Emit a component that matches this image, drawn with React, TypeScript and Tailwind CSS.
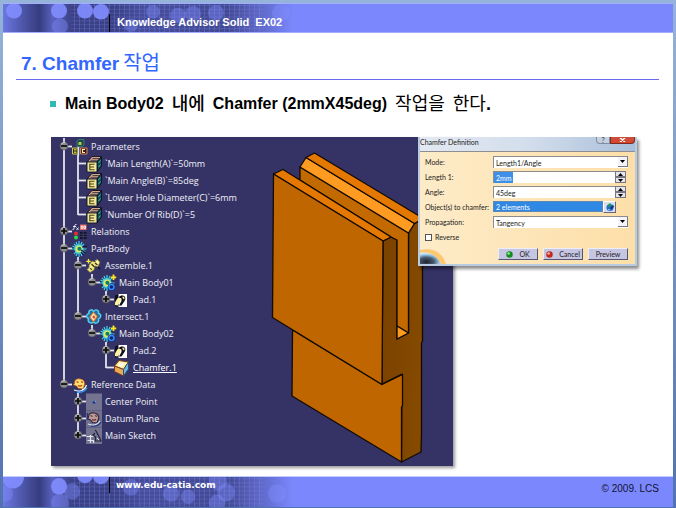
import { useState } from "react"
import type { ReactNode } from "react"

type IconName =
  | "parameters"
  | "param"
  | "relations"
  | "body"
  | "assemble"
  | "bodyPlus"
  | "pad"
  | "intersect"
  | "chamfer"
  | "reference"
  | "point"
  | "plane"
  | "sketch"

interface TreeRow {
  // one character per guide column:
  // "|" line, " " blank, "T" branch, "L" last branch,
  // "m"/"p" minus/plus knob with the line going on, "M"/"P" knob where it ends
  guides: string
  icon: IconName
  label: string
  active?: boolean
}

const TREE: TreeRow[] = [
  { guides: "m", icon: "parameters", label: "Parameters" },
  { guides: "|T", icon: "param", label: "`Main Length(A)`=50mm" },
  { guides: "|T", icon: "param", label: "`Main Angle(B)`=85deg" },
  { guides: "|T", icon: "param", label: "`Lower Hole Diameter(C)`=6mm" },
  { guides: "|L", icon: "param", label: "`Number Of Rib(D)`=5" },
  { guides: "p", icon: "relations", label: "Relations" },
  { guides: "m", icon: "body", label: "PartBody" },
  { guides: "|m", icon: "assemble", label: "Assemble.1" },
  { guides: "||M", icon: "bodyPlus", label: "Main Body01" },
  { guides: "|| P", icon: "pad", label: "Pad.1" },
  { guides: "|M", icon: "intersect", label: "Intersect.1" },
  { guides: "| M", icon: "bodyPlus", label: "Main Body02" },
  { guides: "|  p", icon: "pad", label: "Pad.2" },
  { guides: "|  L", icon: "chamfer", label: "Chamfer.1", active: true },
  { guides: "M", icon: "reference", label: "Reference Data" },
  { guides: " p", icon: "point", label: "Center Point" },
  { guides: " p", icon: "plane", label: "Datum Plane" },
  { guides: " P", icon: "sketch", label: "Main Sketch" },
]

function Guide({ kind }: { kind: string }) {
  const ends = kind === "L" || kind === "M" || kind === "P"
  const knob = "mMpP".includes(kind)
  const plus = kind === "p" || kind === "P"

  return (
    <svg className="h-[17px] w-3.5 shrink-0 overflow-visible" viewBox="0 0 14 17" aria-hidden="true">
      {kind !== " " && <path d={ends ? "M7 0V9" : "M7 0V17"} stroke="#e4e4ee" strokeWidth="1.8" />}
      {kind !== " " && kind !== "|" && <path d="M7 8.500H15" stroke="#e4e4ee" strokeWidth="1.8" />}
      {knob && (
        <>
          <circle cx="7" cy="8" r="4" fill="#8c8c8c" stroke="#4a4a5c" strokeWidth="0.6" />
          <path d="M4.200 6.200a4 4 0 0 1 4-1.600" stroke="#d8d8d8" strokeWidth="1" fill="none" />
          <path d={plus ? "M4 8H10M7 5V11" : "M4 8H10"} stroke="#0a0a0a" strokeWidth="1.7" />
        </>
      )}
    </svg>
  )
}

function Gear({ plus = false }: { plus?: boolean }) {
  return (
    <>
      <path
        d="M7 0v16M-0.500 8h15M2 2.800l10 10.400M12 2.800L2 13.200M4 1l6 14M10 1L4 15M0.500 5l13 6"
        stroke="#3fd4f0"
        strokeWidth="1.2"
      />
      <circle cx="7" cy="8" r="4.600" fill="#5fdccc" />
      <circle cx="7" cy="8" r="3.300" fill="#e0ea58" />
      <circle cx="7.400" cy="7.800" r="2" fill="#0f7c74" />
      {plus ? (
        <>
          <circle cx="11.500" cy="12" r="3.800" fill="#10246c" />
          <circle cx="11.500" cy="12" r="2.500" fill="none" stroke="#2f8cff" strokeWidth="1.5" />
          <path d="M13.500-0.500v5.500M10.800 2.300h5.400" stroke="#ffe81e" strokeWidth="1.8" />
        </>
      ) : (
        <path d="M9 9l5 3M10 6l5-1M9 11l3 3" stroke="#0e1848" strokeWidth="1.2" />
      )}
    </>
  )
}

const SWIRL = (
  <>
    <path
      d="M2.500 6c0-4 3-4.500 6-4S13.500 5 12.500 8l-1.500 4-4.500-.5L4.500 9 1.500 8z"
      fill="#ffe36a"
      stroke="#b04a1c"
      strokeWidth="0.8"
    />
    <path d="M4.500 4.500l2 1M9 4.500l2 1M6 8.500c1.500.8 3 .6 4-.3" stroke="#d42a2a" strokeWidth="1.2" fill="none" />
    <path d="M2 13c5 2 9 1.500 12-3M10 13c2-.5 3.500-2 4.500-5" stroke="#e8f4ff" strokeWidth="1.3" fill="none" />
    <path d="M5 15c4 .8 8-1 10-4" stroke="#2aa0ff" strokeWidth="1.3" fill="none" />
  </>
)

const ICONS: Record<IconName, ReactNode> = {
  parameters: (
    <>
      <path d="M5 2l1.500-1.500H12V6l-1.500 1.500H5z" fill="#1b4a48" stroke="#3e8c80" strokeWidth="0.8" />
      <path d="M7 6V3.500h2V6M7 5h2" stroke="#e8f060" strokeWidth="0.9" fill="none" />
      <path d="M0.500 9h5.500v6H0.500z" fill="#302c10" stroke="#e6de58" strokeWidth="0.9" />
      <path d="M2 10.500h2.500M2 12h2.500M2 13.500h2.500" stroke="#e6de58" strokeWidth="0.8" />
      <path d="M8.500 9H15v6H8.500z" fill="#401a10" stroke="#e8935c" strokeWidth="0.9" />
      <path d="M13 10.500h-2.500v3H13" stroke="#fff0c8" strokeWidth="1.100" fill="none" />
      <path d="M6.500 16.500V8" stroke="#e4e4ee" strokeWidth="1.500" />
    </>
  ),
  param: (
    <>
      <path d="M1 6L6 0.500h9.500L11 6z" fill="#d9a486" stroke="#0f1024" strokeWidth="0.900" />
      <path d="M4.500 4.300h7.500M6.500 2.500h7" stroke="#3a3a44" strokeWidth="0.9" />
      <path d="M11 6l4.500-5.500v9.500L11 16z" fill="#0c5056" stroke="#0f1024" strokeWidth="0.900" />
      <path d="M12.500 7l2-2.500M12.500 11l2-2.500" stroke="#46b4ac" strokeWidth="1" />
      <path d="M1 6H11v10H1z" fill="#f0e79a" stroke="#0f1024" strokeWidth="0.900" />
      <path d="M8.500 8.300H3.800v5.400h4.700M3.800 11h4.200" stroke="#4b4310" strokeWidth="1.1" fill="none" />
    </>
  ),
  relations: (
    <>
      <path d="M4.500 0.500C2.800 0 2.500 2 2.200 3.500S1.500 6 0.500 5.500M1 2.500h3" stroke="#fff" strokeWidth="0.9" fill="none" />
      <path d="M4.500 3.500l2 2.500M6.500 3.500l-2 2.500" stroke="#fff" strokeWidth="0.8" />
      <path d="M8 0.500h6.500V6H8z" fill="#e86a6a" />
      <path d="M9.300 2v2.500h1.500V2zM12 2v2.500h1.500V2z" stroke="#fff" strokeWidth="0.8" fill="none" />
      <circle cx="4" cy="9.500" r="2" fill="#ee2c2c" />
      <circle cx="4" cy="13.500" r="2" fill="#2fd84a" />
      <path d="M8 8h6.500v7H8z" fill="#15152e" />
      <path d="M8 10.300h6.500M8 12.600h6.500M11.200 8v7" stroke="#484878" strokeWidth="0.7" />
    </>
  ),
  body: <Gear />,
  assemble: (
    <>
      <path d="M3 7l3-4 3 1 2-3 3 3-2 5-3-1-1 4-4 2.500-3-3 2-2z" fill="#f2e98c" stroke="#77702c" strokeWidth="0.8" />
      <path d="M5.500 6l3 3M9 5l2.500 2M4 10.500l2 1" stroke="#3a3610" strokeWidth="1.3" />
      <path d="M9.500 2.500l3 3" stroke="#fffce0" strokeWidth="1" />
      <path d="M2.500 1v4.500M0.300 3.300h4.400" stroke="#ffec3a" strokeWidth="1.3" />
      <path d="M12 9l2 2" stroke="#10102c" strokeWidth="1.500" />
    </>
  ),
  bodyPlus: <Gear plus />,
  pad: (
    <>
      <path d="M1 3.500L5 2v12.500H1z" fill="#0e0e1c" />
      <path d="M4.500 2H13v13H4.500z" fill="#fff" />
      <path d="M4.500 5.500C6 3.500 8 3 10 4s1.500 3.500.5 5l-3 4.500H5L7.500 9V6.500z" fill="#0e0e1c" />
      <path d="M3 7c1-1.500 2.500-1.500 4-.5L6 10l-2.500 3.500-2.500-.5V10.500z" fill="#fff29a" />
      <path d="M8.500 4.500c2 0 2.500 1.500 1.500 3L8.500 6z" fill="#fff29a" />
    </>
  ),
  intersect: (
    <>
      <path
        d="M7.500 2.500C6-0.500 2 1 3 4.500 0 5 0 9 2.500 9.500 1 13 5 15.500 7.500 13c2 2.500 6 .5 5-3C15.500 9 15.500 5 12.500 4.500 13.500 1 9.500-0.500 7.500 2.500z"
        fill="#286f9c"
        stroke="#52d2f4"
        strokeWidth="1.4"
      />
      <path d="M7.500 3.500l3.500 4-3.500 5L4 8z" fill="#fff4d0" stroke="#ee8430" strokeWidth="1.1" />
      <path d="M6 8l2-2 1.500 2L8 10z" fill="#d8502c" />
    </>
  ),
  chamfer: (
    <>
      <path d="M5 0.500l9.500 1.500L9.500 9.500 0.500 6z" fill="#fff09a" stroke="#7b3c14" strokeWidth="1" />
      <path d="M6 2.500l5 .8-2.500 4L3.500 5.500z" fill="#fffbe4" />
      <path d="M0.500 6l9 3.500V16L0.500 11.500z" fill="#e9aa58" stroke="#7b3c14" strokeWidth="1" />
      <path d="M9.500 9.500L14.500 2v7l-5 7z" fill="#6ab6dc" stroke="#2a4a6c" strokeWidth="0.9" />
    </>
  ),
  reference: SWIRL,
  point: (
    <>
      <path d="M0-0.500h16v17H0z" fill="#747490" />
      <path d="M6.500 8.500h3M8 7v3" stroke="#163a8c" strokeWidth="1.2" />
      <path d="M9 7.500h1" stroke="#6cc0ff" strokeWidth="1" />
    </>
  ),
  plane: (
    <>
      <path d="M0-0.500h16v17H0z" fill="#70708c" />
      <path d="M2.500 6c0-4 3-4.500 6-4S13.500 5 12.500 8l-1.500 4-4.500-.5L4.500 9 1.500 8z" fill="#b89c98" stroke="#2c2038" strokeWidth="1.1" />
      <path d="M4.500 4.500l2 1M9 4.500l2 1M6 8.500c1.500.8 3 .6 4-.3" stroke="#6c2c38" strokeWidth="1.2" fill="none" />
      <path d="M2 13c5 2 9 1.500 12-3" stroke="#d4e0f4" strokeWidth="1.3" fill="none" />
      <path d="M5 15c4 .8 8-1 10-4M1.500 2v7" stroke="#1f3480" strokeWidth="1.2" fill="none" />
    </>
  ),
  sketch: (
    <>
      <path d="M0-0.500h16v16.500H0z" fill="#747490" />
      <path d="M0.500 8.500h7M4.500 7v8M1.500 12.500h6v2.500" stroke="#e4e4f0" strokeWidth="1.2" fill="none" />
      <path d="M9 2c2 1 2 4 3.500 5.500L15 13H9.500V9L7 7l2-2" stroke="#24243c" strokeWidth="1.2" fill="none" />
      <path d="M11 10l2 2" stroke="#dcdcec" strokeWidth="1" />
    </>
  ),
}

function SpecTree() {
  return (
    <ul className="w-[217px] shrink-0 pt-px pb-[22px] pl-1.5">
      {TREE.map((row) => (
        <li key={row.label} className="flex h-[17px] items-center">
          {row.guides.split("").map((kind, i) => (
            <Guide key={i} kind={kind} />
          ))}
          <svg className="ml-px size-4 shrink-0 overflow-visible" viewBox="0 0 16 16" aria-hidden="true">
            {ICONS[row.icon]}
          </svg>
          <span
            className={
              row.active
                ? "ml-[3px] font-['Open_Sans'] text-[9px] whitespace-nowrap text-white underline underline-offset-1"
                : "ml-[3px] font-['Open_Sans'] text-[9px] whitespace-nowrap text-[#f0f0f6]"
            }
          >
            {row.label}
          </span>
        </li>
      ))}
    </ul>
  )
}

function PartModel() {
  return (
    <svg
      className="h-[329px] w-[162px] shrink-0"
      viewBox="268 137 162 329"
      stroke="#120a02"
      strokeWidth="1.3"
      strokeLinejoin="round"
      role="img"
      aria-label="Part with chamfered rib"
    >
      <defs>
        <linearGradient id="side" x1="0" y1="0" x2="1" y2="0.3">
          <stop offset="0" stopColor="#7a4100" />
          <stop offset="1" stopColor="#854a00" />
        </linearGradient>
      </defs>
      {/* right side of both plates and the lower block */}
      <path
        d="M383 241L391 237L397 240V339L408.500 333V233L414 224L419 221L422.500 224V341L421.500 343V434L421 452L401.500 462L402 374L382 384Z"
        fill="url(#side)"
      />
      {/* lower block front */}
      <path d="M292.500 330L292 396L401.500 462V407L402.500 406V374.500L382 384.500Z" fill="#bf6600" />
      {/* inner face of the back plate */}
      <path d="M300 167L408.500 233V333L397 326V240L391 237L300 180Z" fill="#c26900" />
      <path d="M397 326L408.500 333L397 339Z" fill="#ff9a1c" />
      {/* chamfer */}
      <path d="M300 167L306 157.500L414.500 223.500L408.500 233Z" fill="#ff9b20" />
      <path d="M306 157.500L314.500 153L420 216.500L422 219L414.500 223.500Z" fill="#e57800" />
      {/* front plate */}
      <path d="M273.500 174L283 169.500L391 237L383 241Z" fill="#e57800" />
      <path d="M273.500 174L383 241L382 384.500L272.500 317.500Z" fill="#bf6600" />
    </svg>
  )
}

const FIELD =
  "h-3 min-w-0 rounded-none border-t border-l border-[#8c8c8c] bg-white px-0.5 text-[7px] leading-[10px] text-[#222] outline-none"

function Spinner() {
  return (
    <span className="flex w-[11px] flex-col">
      <button type="button" aria-label="Increase" className="flex h-1.5 items-center justify-center border border-[#77777f] bg-[#e4e4ec]">
        <svg className="h-[3px] w-[5px]" viewBox="0 0 5 3"><path d="M0 3L2.500 0L5 3z" /></svg>
      </button>
      <button type="button" aria-label="Decrease" className="flex h-1.5 items-center justify-center border border-[#77777f] bg-[#e4e4ec]">
        <svg className="h-[3px] w-[5px]" viewBox="0 0 5 3"><path d="M0 0L2.500 3L5 0z" /></svg>
      </button>
    </span>
  )
}

function SelectField({ id, options }: { id: string; options: string[] }) {
  return (
    <span className="relative flex">
      <select id={id} className={`${FIELD} w-full appearance-none`}>
        {options.map((o) => (
          <option key={o}>{o}</option>
        ))}
      </select>
      <span className="pointer-events-none absolute inset-y-px right-0 flex w-2.5 items-center justify-center border-r border-b border-[#77777f] bg-[#f4f4f8]">
        <svg className="h-[3px] w-[5px]" viewBox="0 0 5 3"><path d="M0 0L2.500 3L5 0z" /></svg>
      </span>
    </span>
  )
}

function DialogButton({ children, dot }: { children: string; dot?: "green" | "red" }) {
  return (
    <button
      type="button"
      className="flex h-3 w-10 items-center justify-center gap-1.5 border border-t-[#eeeefa] border-r-[#55556c] border-b-[#55556c] border-l-[#eeeefa] bg-[#c6c5e2] text-[7px] leading-[10px] text-[#222]"
    >
      {dot && (
        <svg className="size-[7px]" viewBox="0 0 8 8" aria-hidden="true">
          <circle cx="4" cy="4" r="3.700" fill={dot === "green" ? "#178a24" : "#c2281c"} />
          <circle cx="3" cy="2.800" r="1.500" fill={dot === "green" ? "#8cf08c" : "#ffb09c"} />
        </svg>
      )}
      {children}
    </button>
  )
}

function ChamferDialog() {
  const [length, setLength] = useState("2mm")
  const [angle, setAngle] = useState("45deg")
  const [reverse, setReverse] = useState(false)

  return (
    <div
      role="dialog"
      aria-labelledby="dialog-title"
      className="absolute top-0 left-[367px] w-[219px] border-x-2 border-b-2 border-[#b9cbe0] bg-[#b9cbe0] font-['Lato',sans-serif] text-[7px] text-[#222] shadow-[2px_3px_3px_rgba(0,0,0,0.45)]"
    >
      <div className="flex h-3.5 items-start justify-between bg-linear-to-r from-[#e3e9f2] via-[#d3deec] to-[#a9bfda]">
        <h2 id="dialog-title" className="leading-[11px]">Chamfer Definition</h2>
        <div className="flex">
          <button type="button" aria-label="Help" className="h-[7px] w-3.5 rounded-bl-sm border border-t-0 border-[#7f8ea4] bg-[#c4d0e0] text-[7px] leading-[5px] text-[#333]">
            ?
          </button>
          <button type="button" aria-label="Close" className="flex h-[7px] w-[25px] items-center justify-center rounded-br-sm border border-t-0 border-[#7c2c22] bg-linear-to-b from-[#c9503e] to-[#d8442a]">
            <svg className="h-1 w-[7px]" viewBox="0 0 7 4"><path d="M1 0L6 4M6 0L1 4" stroke="#fff" strokeWidth="1.5" /></svg>
          </button>
        </div>
      </div>

      <form className="relative border-t border-[#8d8d92] bg-linear-to-r from-[#fdebc8] to-[#fddfa8] pt-1 pr-[7px] pb-1 pl-[5px]">
        <svg className="absolute bottom-0 left-0 h-6 w-[30px]" viewBox="0 0 30 24" aria-hidden="true">
          <defs>
            <radialGradient id="globe" cx="0.3" cy="0.8" r="0.75">
              <stop offset="0" stopColor="#1c2430" />
              <stop offset="0.5" stopColor="#4b5c70" />
              <stop offset="0.8" stopColor="#8fc4e6" />
              <stop offset="1" stopColor="#d8ecf4" />
            </radialGradient>
          </defs>
          <path d="M0 10C13 7 22 12 26 24H0z" fill="#ffb84a" opacity="0.7" />
          <path d="M0 13c10-2 17 3 21 11H0z" fill="url(#globe)" />
        </svg>

        <div className="relative grid grid-cols-[68px_1fr] gap-y-[3px] leading-3">
          <label htmlFor="mode">Mode:</label>
          <SelectField id="mode" options={["Length1/Angle", "Length1/Length2"]} />

          <label htmlFor="length">Length 1:</label>
          <span className="flex pr-0.5">
            <input
              id="length"
              className="h-3 min-w-0 flex-1 border-t border-l border-[#8c8c8c] bg-[linear-gradient(to_right,#3d8fe8_19px,#fff_19px)] px-0.5 text-[7px] text-white outline-none"
              value={length}
              onChange={(e) => setLength(e.target.value)}
            />
            <Spinner />
          </span>

          <label htmlFor="angle">Angle:</label>
          <span className="flex pr-0.5">
            <input id="angle" className={`${FIELD} flex-1`} value={angle} onChange={(e) => setAngle(e.target.value)} />
            <Spinner />
          </span>

          <label htmlFor="objects" className="whitespace-nowrap">Object(s) to chamfer:</label>
          <span className="flex pr-3">
            <input
              id="objects"
              readOnly
              className="h-[11px] min-w-0 flex-1 border border-[#5f87b4] bg-[#2f88e4] px-0.5 text-[7px] text-white outline-none"
              value="2 elements"
            />
            <button type="button" aria-label="Edit selection" className="flex h-3 w-[13px] items-center justify-center border border-t-[#fff] border-r-[#66667c] border-b-[#66667c] border-l-[#fff] bg-[#dcdcf0]">
              <svg className="size-2.5" viewBox="0 0 10 10">
                <circle cx="5" cy="5.500" r="3.500" fill="#2468c8" />
                <path d="M2 4l3-3 1.500 1.500L4 5z" fill="#1c9c4c" />
                <path d="M5 6l3-3 1 1.500-2.500 3z" fill="#14306c" />
                <path d="M6.500 2.500h2M3 7.500l2 .5" stroke="#8cd8ff" strokeWidth="1" />
              </svg>
            </button>
          </span>

          <label htmlFor="propagation">Propagation:</label>
          <SelectField id="propagation" options={["Tangency", "Minimal"]} />

          <label className="flex items-center gap-[3px]">
            <input
              type="checkbox"
              className="size-[7px] appearance-none border border-[#555] bg-white checked:bg-[#3d8fe8]"
              checked={reverse}
              onChange={(e) => setReverse(e.target.checked)}
            />
            Reverse
          </label>
        </div>

        <div className="relative mt-[5px] flex justify-end gap-[5px]">
          <DialogButton dot="green">OK</DialogButton>
          <DialogButton dot="red">Cancel</DialogButton>
          <DialogButton>Preview</DialogButton>
        </div>
      </form>
    </div>
  )
}

// dotted, fading decoration shared by the top and bottom bars
function BarPattern({ id, flip = false }: { id: string; flip?: boolean }) {
  const dots = flip
    ? [[10, 0, 11], [2, 16, 8], [56, 9, 8], [69, 14, 8], [57, 25, 9], [82, -2, 8], [98, -1, 8], [128, 10, 8], [168, 16, 8], [185, 19, 7], [215, 4, 9], [223, 15, 9], [214, 25, 8], [274, 16, 9]]
    : [[11, 7, 8], [56, 7, 8], [57, 23, 8], [82, 7, 8], [98, 8, 8], [150, 8, 7], [175, 12, 8], [190, 10, 8], [213, 9, 8], [128, 22, 7], [278, 9, 9]]

  return (
    <svg className="absolute inset-y-0 left-0 h-full w-[330px]" viewBox="0 0 330 29" preserveAspectRatio="none" aria-hidden="true">
      <defs>
        <linearGradient id={`${id}-fade`}>
          <stop offset="0" stopColor="#2f3470" stopOpacity="0.2" />
          <stop offset="0.06" stopColor="#2f3470" stopOpacity="0.6" />
          <stop offset="0.11" stopColor="#2f3470" stopOpacity="0.9" />
          <stop offset="0.15" stopColor="#2f3470" stopOpacity="0.45" />
          <stop offset="0.21" stopColor="#2f3470" stopOpacity="0.85" />
          <stop offset="0.34" stopColor="#2f3470" stopOpacity="0.85" />
          <stop offset="0.42" stopColor="#2f3470" stopOpacity="0.7" />
          <stop offset="0.68" stopColor="#2f3470" stopOpacity="0.75" />
          <stop offset="0.76" stopColor="#2f3470" stopOpacity="0.45" />
          <stop offset="0.88" stopColor="#2f3470" stopOpacity="0" />
        </linearGradient>
        <pattern id={`${id}-grid`} width="5" height="4" patternUnits="userSpaceOnUse">
          <path d="M1.500 0V4" stroke="#7d88e8" strokeWidth="1" opacity="0.3" />
          <path d="M0 1.500H5" stroke="#7d88e8" strokeWidth="1" opacity="0.25" />
        </pattern>
      </defs>
      <path d="M0 0H330V29H0z" fill={`url(#${id}-fade)`} />
      <path d="M68 0H260V29H68z" fill={`url(#${id}-grid)`} />
      {dots.map(([cx, cy, r]) => (
        <circle key={`${cx}-${cy}`} cx={cx} cy={cy} r={r} fill="#828eff" opacity={cx < 110 && cy < 10 ? 0.9 : 0.4} />
      ))}
    </svg>
  )
}

export default function App() {
  return (
    <div className="flex min-h-screen flex-col bg-linear-to-b from-[#96b4da] to-[#5172ae] pt-[3px] pr-[3px] pb-px pl-[3px] font-['Liberation_Sans','Noto_Sans_CJK_KR',sans-serif]">
      <header className="relative flex h-[30px] items-end overflow-hidden border-t border-b border-[#a3aeff] bg-[#7b88fd]">
        <BarPattern id="top" />
        <p className="relative ml-[106px] h-[18px] border-l border-black pl-[7px] text-[11px] leading-[17px] font-bold text-white">
          Knowledge Advisor Solid&nbsp; EX02
        </p>
      </header>

      <main className="flex-1 bg-white pr-3.5 pl-[13px]">
        <h1 className="mt-[18px] flex items-center gap-1 border-b border-[#6a6af0] pb-[3px] pl-[5px] text-[19px] leading-[25px] font-bold text-[#3366ff]">
          7. Chamfer <span className="text-[20px] font-normal">작업</span>
        </h1>

        <div className="mt-3 flex items-center pl-[34px]">
          <span className="mr-[9px] size-1.5 bg-[#35b8b4]" />
          <p className="flex items-center gap-2 text-[16px] leading-6 font-bold text-black">
            <span>Main Body02</span>
            <span className="text-[18px] font-medium">내에</span>
            <span>Chamfer (2mmX45deg)</span>
            <span className="text-[18px] font-normal">작업을</span>
            <span className="text-[18px] font-normal">
              한다<b>.</b>
            </span>
          </p>
        </div>

        <figure className="relative mt-[21px] ml-[35px] flex w-[402px] bg-[#353366] shadow-[2px_2px_3px_rgba(0,0,0,0.4)]">
          <SpecTree />
          <PartModel />
          <ChamferDialog />
        </figure>
      </main>

      <footer className="relative flex h-[31px] items-start justify-between overflow-hidden border-t border-[#c3caff] bg-[#7b88fd]">
        <BarPattern id="bottom" flip />
        <a
          href="#"
          className="relative ml-[106px] h-4 border-l border-black pl-1.5 font-['DejaVu_Sans',sans-serif] text-[9px] leading-[17px] font-bold text-white"
        >
          www.edu-catia.com
        </a>
        <p className="mr-3.5 text-[10px] leading-[23px] text-[#111133]">© 2009. LCS</p>
      </footer>
    </div>
  )
}
